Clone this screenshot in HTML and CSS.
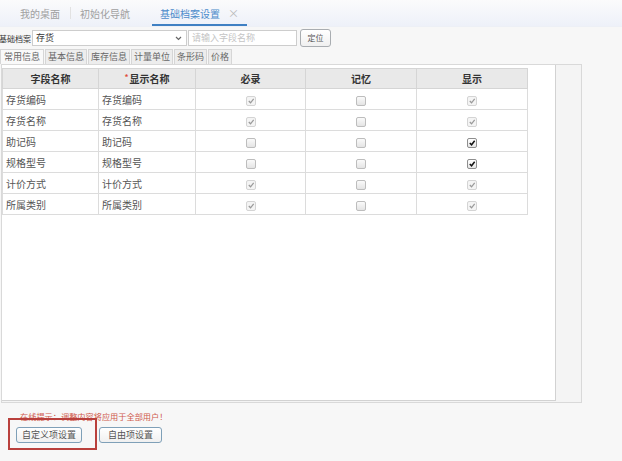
FILE: index.html
```html
<!DOCTYPE html>
<html lang="zh-CN">
<head>
  <meta charset="UTF-8">
  <title>基础档案设置</title>
  <link rel="stylesheet" href="styles.css">
</head>
<body>

<div class="topbar">
  <span class="tab">我的桌面</span>
  <span class="sep"></span>
  <span class="tab">初始化导航</span>
  <span class="tab active">基础档案设置<i class="close">×</i></span>
</div>

<div class="toolbar">
  <span class="label">基础档案</span>
  <span class="select">存货
    <svg class="chev" width="7" height="5" viewBox="0 0 7 5"><path d="M1 1 L3.5 3.5 L6 1" fill="none" stroke="#666" stroke-width="1.2"/></svg>
  </span>
  <span class="search">请输入字段名称</span>
  <span class="btn locate">定位</span>
</div>

<div class="subtabs">
  <span class="stab on">常用信息</span>
  <span class="stab">基本信息</span>
  <span class="stab">库存信息</span>
  <span class="stab">计量单位</span>
  <span class="stab">条形码</span>
  <span class="stab">价格</span>
</div>

<div class="panel">
  <div class="grid">
    <table>
      <colgroup>
        <col class="c1"><col class="c2"><col class="c3"><col class="c4"><col class="c5">
      </colgroup>
      <thead>
      <tr>
        <th>字段名称</th>
        <th><em>*</em>显示名称</th>
        <th>必录</th>
        <th>记忆</th>
        <th>显示</th>
      </tr>
      </thead>
      <tbody>
      <tr>
        <td>存货编码</td><td>存货编码</td>
        <td class="ck"><span class="cb dis"><svg viewBox="0 0 9 9"><path d="M2 4.5 L4 6.5 L7.5 2"/></svg></span></td>
        <td class="ck"><span class="cb"></span></td>
        <td class="ck"><span class="cb dis"><svg viewBox="0 0 9 9"><path d="M2 4.5 L4 6.5 L7.5 2"/></svg></span></td>
      </tr>
      <tr>
        <td>存货名称</td><td>存货名称</td>
        <td class="ck"><span class="cb dis"><svg viewBox="0 0 9 9"><path d="M2 4.5 L4 6.5 L7.5 2"/></svg></span></td>
        <td class="ck"><span class="cb"></span></td>
        <td class="ck"><span class="cb dis"><svg viewBox="0 0 9 9"><path d="M2 4.5 L4 6.5 L7.5 2"/></svg></span></td>
      </tr>
      <tr>
        <td>助记码</td><td>助记码</td>
        <td class="ck"><span class="cb"></span></td>
        <td class="ck"><span class="cb"></span></td>
        <td class="ck"><span class="cb on"><svg viewBox="0 0 9 9"><path d="M2 4.5 L4 6.5 L7.5 2"/></svg></span></td>
      </tr>
      <tr>
        <td>规格型号</td><td>规格型号</td>
        <td class="ck"><span class="cb"></span></td>
        <td class="ck"><span class="cb"></span></td>
        <td class="ck"><span class="cb on"><svg viewBox="0 0 9 9"><path d="M2 4.5 L4 6.5 L7.5 2"/></svg></span></td>
      </tr>
      <tr>
        <td>计价方式</td><td>计价方式</td>
        <td class="ck"><span class="cb dis"><svg viewBox="0 0 9 9"><path d="M2 4.5 L4 6.5 L7.5 2"/></svg></span></td>
        <td class="ck"><span class="cb"></span></td>
        <td class="ck"><span class="cb dis"><svg viewBox="0 0 9 9"><path d="M2 4.5 L4 6.5 L7.5 2"/></svg></span></td>
      </tr>
      <tr>
        <td>所属类别</td><td>所属类别</td>
        <td class="ck"><span class="cb dis"><svg viewBox="0 0 9 9"><path d="M2 4.5 L4 6.5 L7.5 2"/></svg></span></td>
        <td class="ck"><span class="cb"></span></td>
        <td class="ck"><span class="cb dis"><svg viewBox="0 0 9 9"><path d="M2 4.5 L4 6.5 L7.5 2"/></svg></span></td>
      </tr>
      </tbody>
    </table>
  </div>
</div>

<div class="footer">
  <div class="hint">在线提示：调整内容将应用于全部用户！</div>
  <div class="actions">
    <span class="btn marked">自定义项设置</span>
    <span class="btn">自由项设置</span>
  </div>
</div>

</body>
</html>
```

FILE: styles.css
```css
body{
  margin: 0;
  background: #f7f7f7;
  font-family: "Noto Sans CJK SC", "Liberation Sans", sans-serif;
  color: #555;
}

/* 顶部页签 */
.topbar{
  display: flex;
  align-items: center;
  height: 27px;
  padding-left: 20px;
  background: linear-gradient(#fbfbfc, #eef1f9);
  border-bottom: 1px solid #edf0f6;
  box-sizing: border-box;
}

.tab{
  font-size: 10px;
  line-height: 27px;
  color: #a0a0a0;
}

.sep{
  width: 1px;
  height: 12px;
  margin: 0 9px 0 10px;
  background: #e2e2e2;
}

.tab.active{
  margin-left: 22px;
  padding: 0 8px;
  color: #4d8ccb;
  line-height: 21px;
  border-bottom: 2px solid #3f80c3;
  margin-top: 2px;
}

.close{
  font-style: normal;
  color: #b9b9b9;
  margin-left: 8px;
  font-size: 11px;
}

/* 查询条 */
.toolbar{
  display: flex;
  align-items: center;
  height: 18px;
  margin-top: 2px;
}

.label{
  width: 32px;
  font-size: 8px;
  color: #333;
  white-space: nowrap;
  overflow: hidden;
  text-indent: -1px;
}

.select, .search{
  height: 16px;
  box-sizing: border-box;
  border: 1px solid #cdcdcd;
  background: #fff;
  font-size: 9px;
  line-height: 14px;
  padding-left: 3px;
}

.select{
  position: relative;
  width: 155px;
  color: #333;
}

.chev{
  position: absolute;
  right: 4px;
  top: 5px;
}

.search{
  width: 109px;
  margin-left: 1px;
  color: #c4c4c4;
}

.btn{
  display: inline-block;
  height: 16px;
  box-sizing: border-box;
  border: 1px solid #a9adb1;
  border-radius: 3px;
  background: linear-gradient(#fff, #f0f0f0);
  font-size: 9px;
  line-height: 14px;
  text-align: center;
  color: #555;
}

.locate{
  width: 31px;
  height: 18px;
  line-height: 16px;
  margin-left: 3px;
  font-size: 8px;
}

/* 子页签 */
.subtabs{
  display: flex;
  gap: 1px;
  height: 15px;
  margin-top: 2px;
}

.stab{
  padding: 0 2px;
  border: 1px solid #d6d6d6;
  border-bottom: none;
  background: #ededed;
  font-size: 9px;
  line-height: 14px;
  color: #666;
}

.stab.on{
  background: #f9f9f9;
  padding: 0 3px;
}

/* 表格区 */
.panel{
  width: 581px;
  height: 339px;
  margin-left: 1px;
  box-sizing: border-box;
  border: 1px solid #d9d9d9;
  background: #f4f4f4;
}

.grid{
  width: 554px;
  height: 336px;
  box-sizing: border-box;
  background: #fff;
  border-right: 1px solid #d2d2d2;
  border-bottom: 1px solid #d2d2d2;
  padding-top: 3px;
}

table{
  border-collapse: collapse;
  table-layout: fixed;
  width: 525px;
  font-size: 10px;
}

.c1{ width: 96px; }
.c2{ width: 97px; }
.c3{ width: 110px; }
.c4{ width: 111px; }
.c5{ width: 111px; }

th{
  height: 19px;
  padding: 0;
  background: #e9e9e9;
  border: 1px solid #d5d5d5;
  font-weight: bold;
  color: #333;
  text-align: center;
}

th em{
  font-style: normal;
  color: #e04c3c;
  font-size: 8px;
  vertical-align: 3px;
  margin-right: 1px;
}

td{
  height: 20px;
  padding: 0 0 0 3px;
  border: 1px solid #dcdcdc;
  color: #555;
}

td.ck{
  padding: 0;
  text-align: center;
}

.cb{
  display: inline-block;
  width: 8px;
  height: 8px;
  vertical-align: middle;
  border: 1px solid #bdbdbd;
  border-radius: 2px;
  background: linear-gradient(#fafafa, #e4e4e4);
}

.cb svg{
  display: block;
  width: 8px;
  height: 8px;
}

.cb path{
  fill: none;
  stroke-width: 1.4;
}

.cb.dis{
  border-color: #d4d4d4;
  background: #f4f4f4;
}

.cb.dis path{ stroke: #9a9a9a; }

.cb.on{
  border-color: #8e8e8e;
  background: linear-gradient(#fff, #e6e6e6);
}

.cb.on path{
  stroke: #111;
  stroke-width: 1.7;
}

/* 底部 */
.footer{
  height: 58px;
  padding: 7px 0 0 20px;
  box-sizing: border-box;
}

.hint{
  font-size: 8.2px;
  line-height: 12px;
  height: 12px;
  color: #cf5a4c;
}

.actions{
  display: flex;
  align-items: flex-start;
  gap: 17px;
  height: 16px;
  margin: 5px 0 0 -4px;
}

.actions .btn{
  width: 63px;
  height: 16px;
  line-height: 14px;
  border-color: #7fa0b8;
}

.actions .btn.marked{
  position: relative;
  width: 66px;
}

/* 红色标注框 */
.marked::after{
  content: "";
  position: absolute;
  left: -9px;
  top: -10px;
  width: 89px;
  height: 32px;
  box-sizing: border-box;
  border: 2px solid #b9403c;
}
```
